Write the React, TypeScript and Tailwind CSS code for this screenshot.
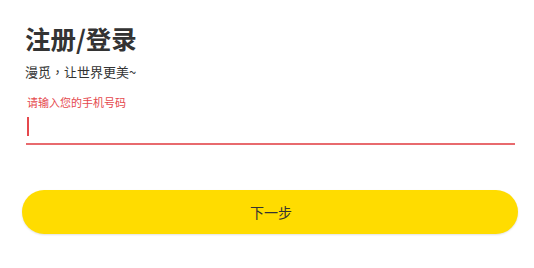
import React from "react";

export default function App() {
  return (
    <div
      className="w-[534px] h-[268px] bg-white overflow-hidden"
      style={{ fontFamily: '"Noto Sans CJK SC", "Noto Sans", sans-serif' }}
    >
      <div className="pl-[25px] pt-[21px]">
        <h1 className="text-[25.5px] leading-[34px] font-bold text-[#333333]">注册/登录</h1>
        <p className="mt-[8px] text-[13px] leading-[18px] text-[#333333]">
          漫觅<span style={{ fontFamily: '"Noto Sans CJK TC", sans-serif' }}>，</span>让世界更美~
        </p>
      </div>
      <div className="ml-[26px] w-[489px] mt-[14px]">
        <div className="pl-[1px] text-[11px] leading-[14px] text-[#e5484d]">请输入您的手机号码</div>
        <div className="h-[36px] flex items-center border-b-2 border-[#e86a6e]">
          <div className="ml-[1px] mt-[0px] w-[2px] h-[19px] bg-[#e5484d]" />
        </div>
      </div>
      <div className="ml-[22px] mt-[45px] w-[496px] h-[44px] rounded-full bg-[#ffdc00] shadow-[0_1px_2px_rgba(0,0,0,0.12)] flex items-center justify-center">
        <span className="text-[14px] text-[#333333] ml-[2px]">下一步</span>
      </div>
    </div>
  );
}
